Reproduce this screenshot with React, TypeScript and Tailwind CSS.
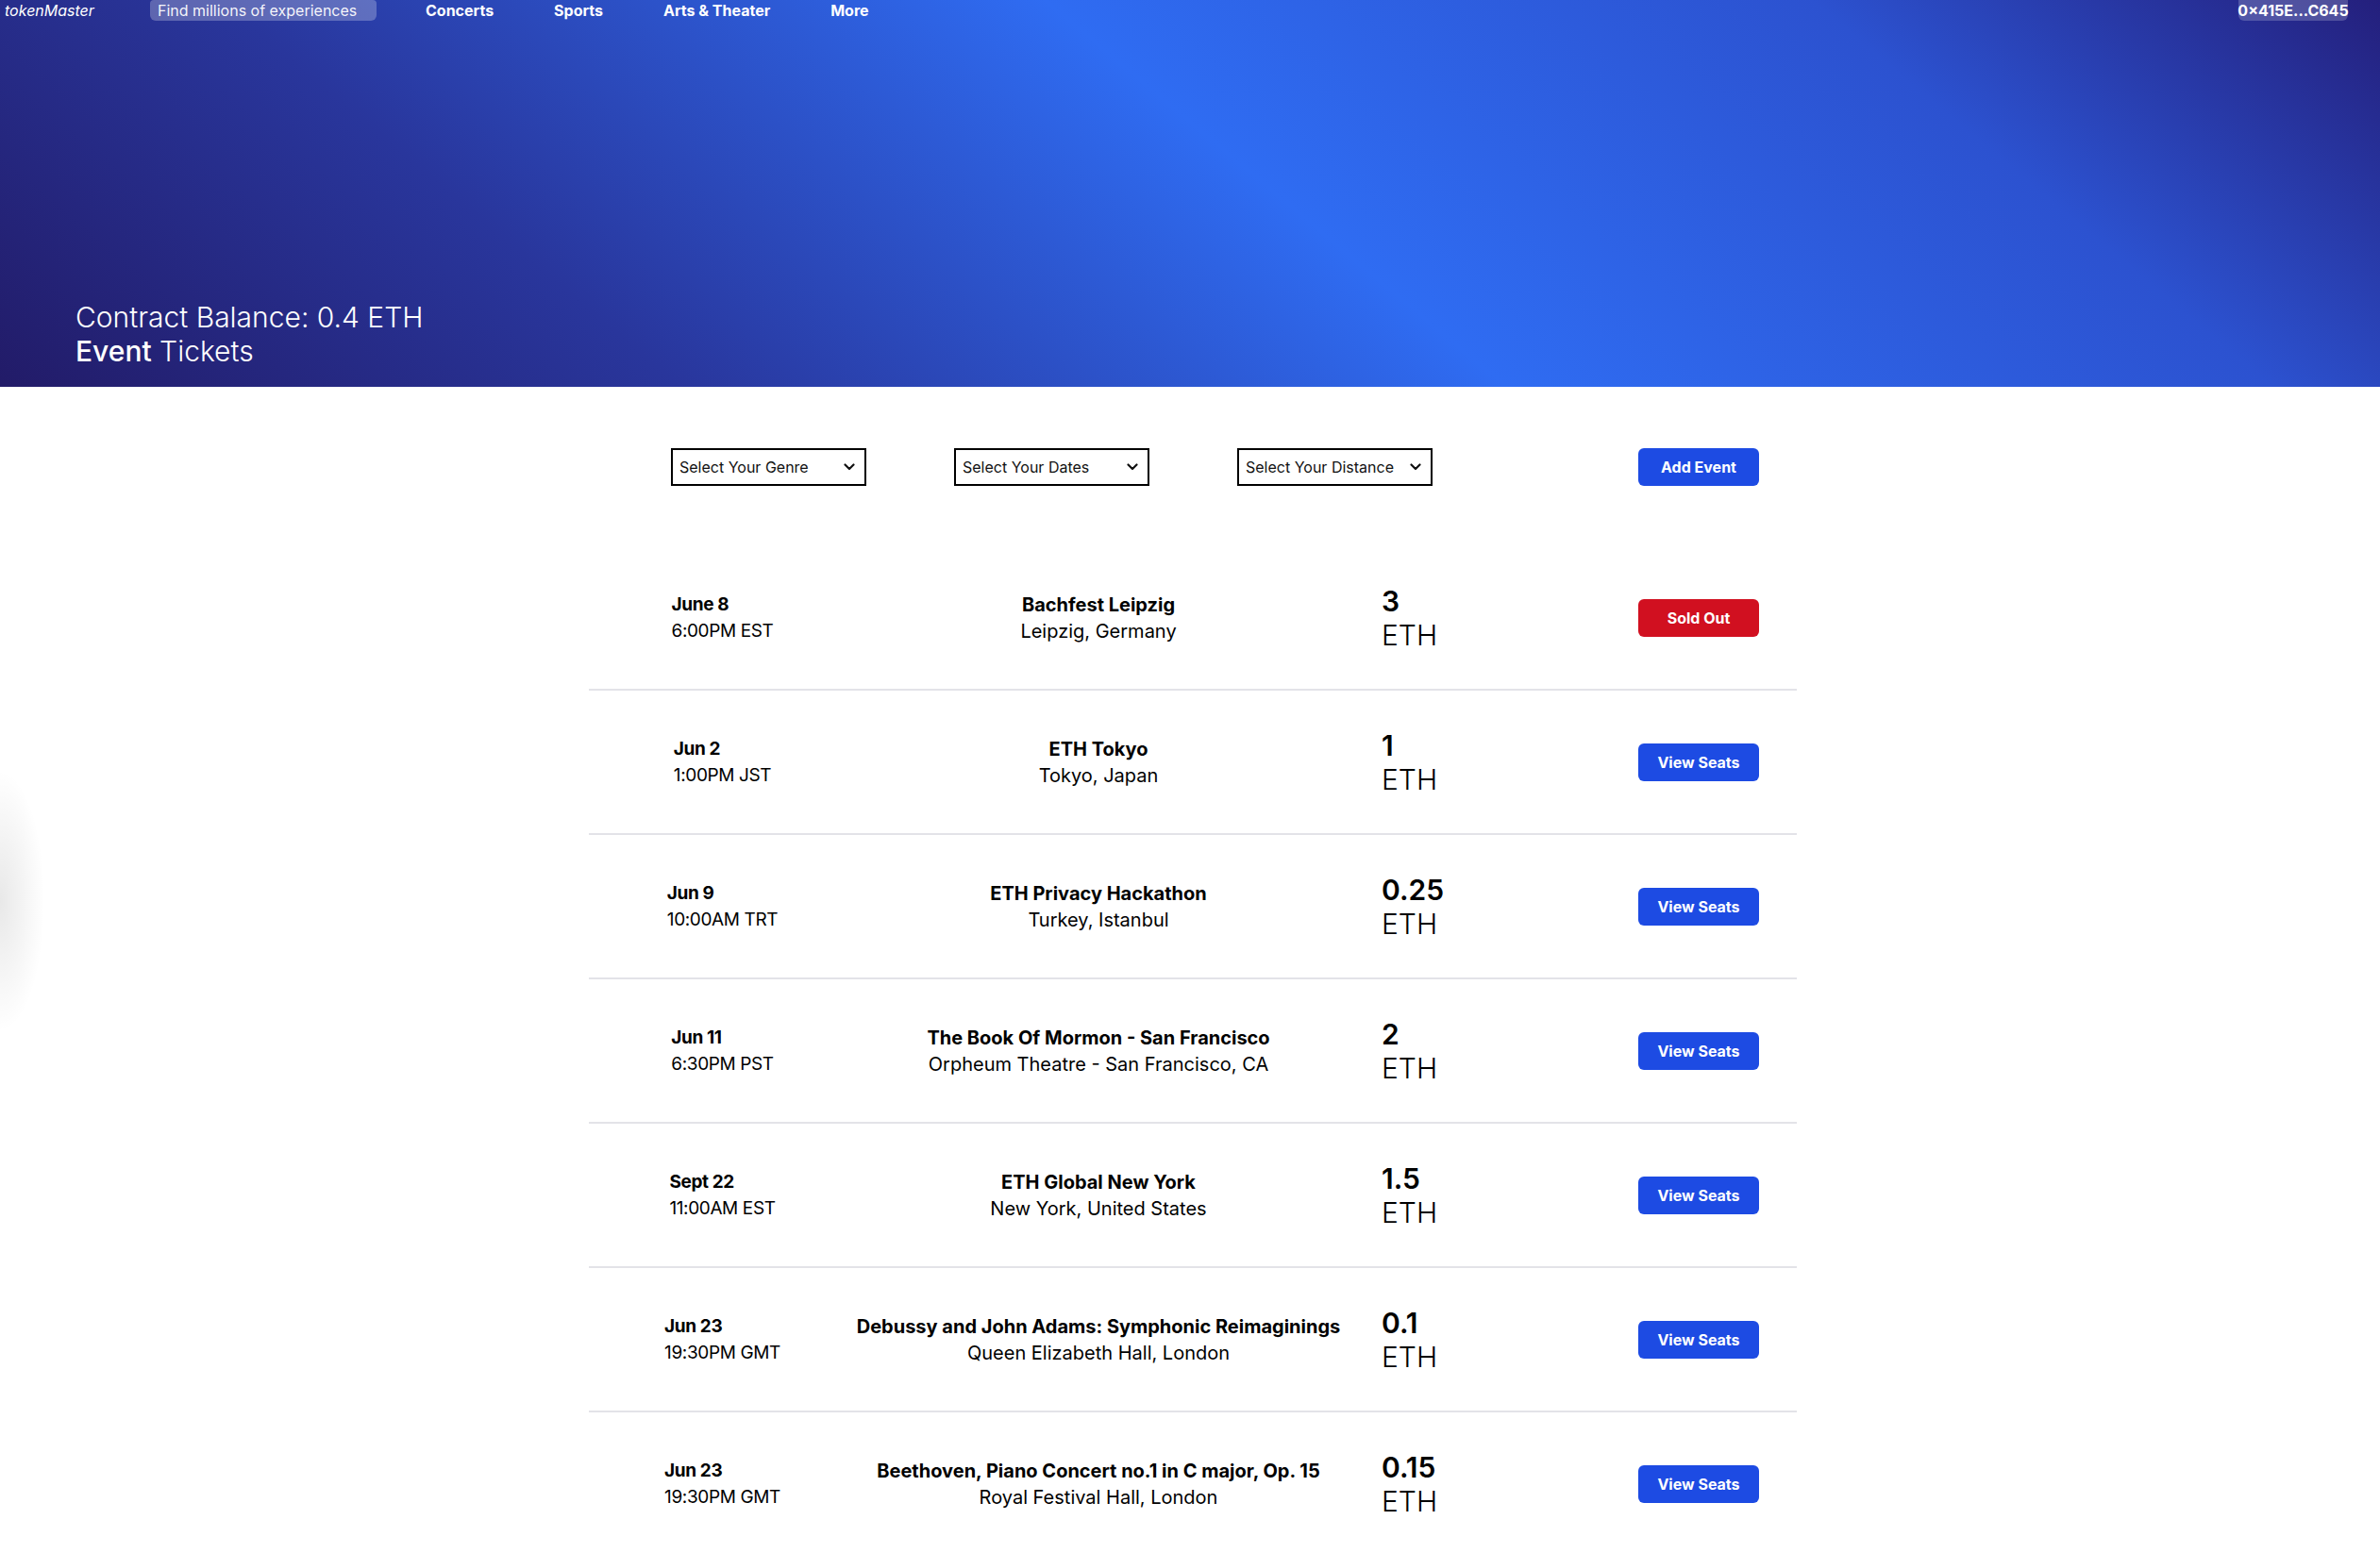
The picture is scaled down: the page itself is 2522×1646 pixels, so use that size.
import React from "react";

type Ev = {
  date: string;
  time: string;
  title: string;
  place: string;
  price: string;
  soldOut?: boolean;
};

const events: Ev[] = [
  { date: "June 8", time: "6:00PM EST", title: "Bachfest Leipzig", place: "Leipzig, Germany", price: "3", soldOut: true },
  { date: "Jun 2", time: "1:00PM JST", title: "ETH Tokyo", place: "Tokyo, Japan", price: "1" },
  { date: "Jun 9", time: "10:00AM TRT", title: "ETH Privacy Hackathon", place: "Turkey, Istanbul", price: "0.25" },
  { date: "Jun 11", time: "6:30PM PST", title: "The Book Of Mormon - San Francisco", place: "Orpheum Theatre - San Francisco, CA", price: "2" },
  { date: "Sept 22", time: "11:00AM EST", title: "ETH Global New York", place: "New York, United States", price: "1.5" },
  { date: "Jun 23", time: "19:30PM GMT", title: "Debussy and John Adams: Symphonic Reimaginings", place: "Queen Elizabeth Hall, London", price: "0.1" },
  { date: "Jun 23", time: "19:30PM GMT", title: "Beethoven, Piano Concert no.1 in C major, Op. 15", place: "Royal Festival Hall, London", price: "0.15" },
];

function Chevron() {
  return (
    <svg width="12" height="8" viewBox="0 0 12 8" fill="none" className="shrink-0">
      <polyline points="1.5,1.5 6,6 10.5,1.5" stroke="#111" strokeWidth="2.2" strokeLinecap="round" strokeLinejoin="round" />
    </svg>
  );
}

function FakeSelect({ label }: { label: string }) {
  return (
    <div className="flex h-10 w-[207px] items-center justify-between border-2 border-black bg-white pl-[7px] pr-[10px] text-[16px] text-[#111]">
      <span>{label}</span>
      <Chevron />
    </div>
  );
}

export default function App() {
  return (
    <div className="relative min-h-screen bg-white font-['Inter','Noto_Sans',sans-serif] text-black">
      {/* Header */}
      <header className="flex h-[410px] flex-col justify-between bg-[linear-gradient(40deg,#221b68_0%,#29369c_24%,#2f6cf2_53%,#2c52d0_80%,#241f7c_100%)] text-white">
        <nav className="flex h-[22px] items-center text-[16px]">
          <div className="w-[159px] pl-[5px] italic">tokenMaster</div>
          <div className="flex h-[22px] w-[240px] items-center rounded-b-md rounded-t-sm bg-white/25 px-2 text-white/95">
            Find millions of experiences
          </div>
          <div className="ml-[52px] flex items-center gap-16 font-bold">
            <span>Concerts</span>
            <span>Sports</span>
            <span>Arts &amp; Theater</span>
            <span>More</span>
          </div>
          <div className="ml-auto mr-[34px] flex h-[22px] w-[116px] items-center justify-center rounded-b-md bg-white/20 font-bold">
            0×415E...C645
          </div>
        </nav>
        <div className="pb-5 pl-[80px] text-[30px] leading-9">
          <div className="font-light">Contract Balance: 0.4 ETH</div>
          <div>
            <span className="font-medium">Event</span> <span className="font-light">Tickets</span>
          </div>
        </div>
      </header>

      <main className="mx-auto w-[1280px] translate-x-[3px]">
        {/* Filters */}
        <div className="flex items-center pb-16 pl-[87px] pr-[40px] pt-[65px]">
          <div className="flex gap-[93px]">
            <FakeSelect label="Select Your Genre" />
            <FakeSelect label="Select Your Dates" />
            <FakeSelect label="Select Your Distance" />
          </div>
          <button className="ml-auto flex h-10 w-32 items-center justify-center rounded-md bg-[#1d4be3] text-[16px] font-bold text-white">
            Add Event
          </button>
        </div>

        {/* Events */}
        <div>
          {events.map((e, i) => (
            <div
              key={i}
              className="grid h-[153px] grid-cols-[283px_514px_1fr_128px] items-center border-b-2 border-[#e3e3e8] pr-[40px]"
            >
              <div className="flex justify-center">
                <div className="text-left text-[19px] leading-7 tracking-[-0.02em]">
                  <div className="font-bold">{e.date}</div>
                  <div>{e.time}</div>
                </div>
              </div>
              <div className="text-center text-[20px] leading-7">
                <div className="font-bold">{e.title}</div>
                <div>{e.place}</div>
              </div>
              <div className="pl-[43px] text-[30px] leading-9">
                <div className="font-semibold">{e.price}</div>
                <div className="font-light">ETH</div>
              </div>
              <div>
                {e.soldOut ? (
                  <button className="flex h-10 w-32 items-center justify-center rounded-md bg-[#d11020] text-[16px] font-bold text-white">
                    Sold Out
                  </button>
                ) : (
                  <button className="flex h-10 w-32 items-center justify-center rounded-md bg-[#1d4be3] text-[16px] font-bold text-white">
                    View Seats
                  </button>
                )}
              </div>
            </div>
          ))}
        </div>
      </main>

      {/* faint edge shadow on the left */}
      <div className="pointer-events-none absolute left-0 top-[815px] h-[280px] w-[48px] bg-[radial-gradient(ellipse_at_left,rgba(0,0,0,0.09),rgba(0,0,0,0)_70%)]" />
    </div>
  );
}
